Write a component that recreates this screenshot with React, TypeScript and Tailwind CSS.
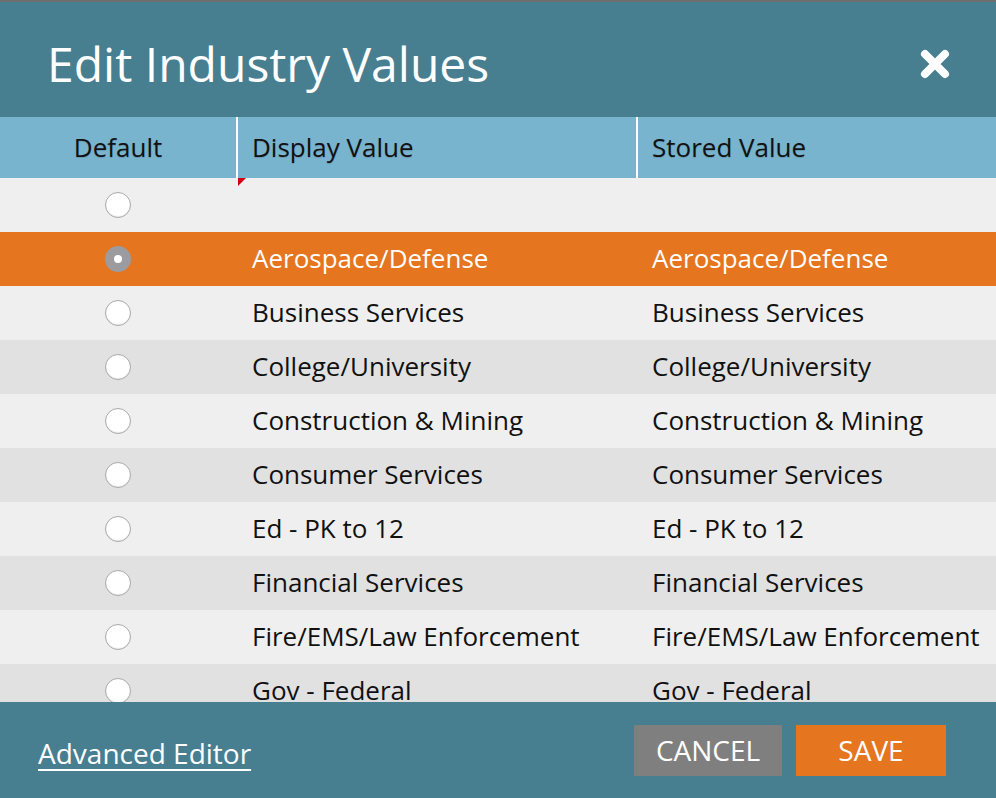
const rows = [
  "",
  "Aerospace/Defense",
  "Business Services",
  "College/University",
  "Construction & Mining",
  "Consumer Services",
  "Ed - PK to 12",
  "Financial Services",
  "Fire/EMS/Law Enforcement",
  "Gov - Federal",
  "Gov - State & Local",
];

function Radio({ checked }: { checked: boolean }) {
  if (checked) {
    return (
      <span className="flex h-[26px] w-[26px] items-center justify-center rounded-full bg-[#9b9ba0]">
        <span className="h-[8px] w-[8px] rounded-full bg-white" />
      </span>
    );
  }
  return <span className="block h-[26px] w-[26px] rounded-full border border-[#a9a9a9] bg-white shadow-[inset_0_-1px_1px_rgba(0,0,0,0.08)]" />;
}

export default function App() {
  return (
    <div className="flex h-[798px] w-[996px] flex-col overflow-hidden bg-[#477f91] font-['Open_Sans',sans-serif]">
      <div className="h-[2px] bg-[#6e6e6e]" />

      {/* Title bar */}
      <div className="flex h-[115px] items-center justify-between pl-[47px] pr-[46px] pt-[9px]">
        <h1 className="text-[48px] leading-none text-white">Edit Industry Values</h1>
        <svg width="30" height="30" viewBox="0 0 30 30">
          <path d="M5 5 L25 25 M25 5 L5 25" stroke="white" strokeWidth="8" strokeLinecap="round" />
        </svg>
      </div>

      {/* Column headers */}
      <div className="flex h-[61px] bg-[#79b4cf] text-[26px] text-[#111] [text-shadow:0_1px_1px_rgba(0,0,0,0.15)]">
        <div className="flex w-[236px] items-center justify-center">Default</div>
        <div className="w-[2px] bg-white" />
        <div className="flex w-[398px] items-center pl-[14px]">Display Value</div>
        <div className="w-[2px] bg-white" />
        <div className="flex flex-1 items-center pl-[14px]">Stored Value</div>
      </div>

      {/* Rows */}
      <div className="relative flex-1 overflow-hidden bg-[#efefef]">
        <span className="absolute left-[238px] top-0 h-0 w-0 border-r-[8px] border-t-[8px] border-r-transparent border-t-[#d10010]" />
        {rows.map((r, i) => {
          const selected = i === 1;
          const bg = selected ? "bg-[#e5751e] text-white" : i % 2 === 0 ? "bg-[#efefef] text-[#111]" : "bg-[#e1e1e1] text-[#111]";
          return (
            <div key={i} className={`flex h-[54px] items-center text-[26px] ${bg}`}>
              <div className="flex w-[236px] justify-center">
                <Radio checked={selected} />
              </div>
              <div className="w-[400px] pl-[16px] pb-[2px]">{r}</div>
              <div className="flex-1 pl-[16px] pb-[2px]">{r}</div>
            </div>
          );
        })}
      </div>

      {/* Footer */}
      <div className="flex h-[96px] items-center justify-between pl-[38px] pr-[50px]">
        <a href="#" className="mt-[6px] text-[28px] text-white underline decoration-[2px] underline-offset-[5px]">
          Advanced Editor
        </a>
        <div className="flex gap-[14px]">
          <button className="h-[51px] w-[148px] bg-[#7f7f80] text-[28px] text-white">CANCEL</button>
          <button className="h-[51px] w-[150px] bg-[#e5751e] text-[28px] text-white">SAVE</button>
        </div>
      </div>
    </div>
  );
}
